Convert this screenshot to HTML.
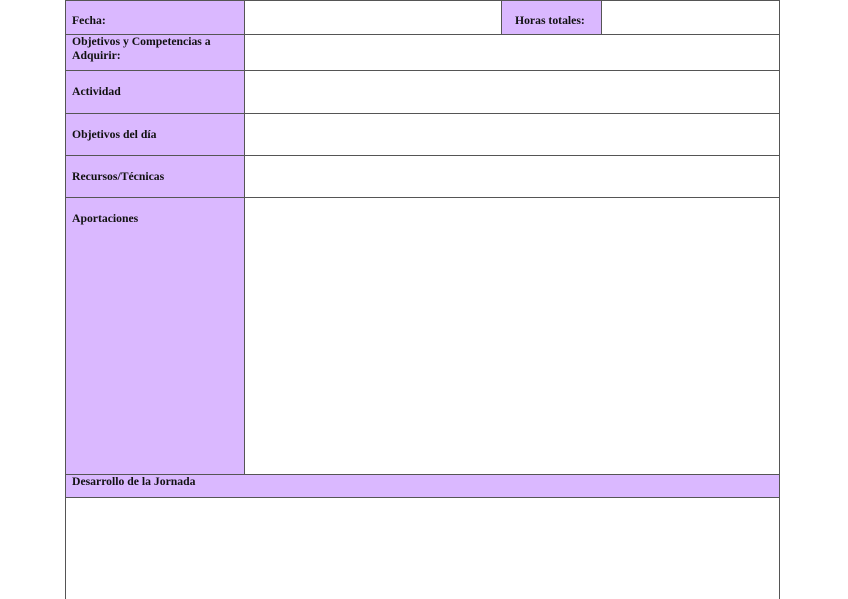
<!DOCTYPE html><html><head><style>
body{margin:0;width:848px;height:599px;background:#fff;position:relative;overflow:hidden;font-family:"Liberation Serif",serif;font-weight:bold;font-size:11.7px;color:#111}
.p{position:absolute;background:#dab8ff}
.h{position:absolute;height:1px;background:#555}
.v{position:absolute;width:1px;background:#555}
.t{position:absolute;line-height:14px}
</style></head><body>
<div class="p" style="left:66px;top:0;width:178px;height:474px"></div>
<div class="p" style="left:501px;top:0;width:100px;height:34px"></div>
<div class="p" style="left:66px;top:474px;width:713px;height:23px"></div>
<div class="h" style="left:66px;top:0;width:714px"></div>
<div class="h" style="left:66px;top:34px;width:714px"></div>
<div class="h" style="left:66px;top:70px;width:714px"></div>
<div class="h" style="left:66px;top:113px;width:714px"></div>
<div class="h" style="left:66px;top:155px;width:714px"></div>
<div class="h" style="left:66px;top:197px;width:714px"></div>
<div class="h" style="left:66px;top:474px;width:714px"></div>
<div class="h" style="left:66px;top:497px;width:714px"></div>
<div class="v" style="left:65px;top:0;height:599px"></div>
<div class="v" style="left:779px;top:0;height:599px"></div>
<div class="v" style="left:244px;top:0;height:474px"></div>
<div class="v" style="left:501px;top:0;height:34px"></div>
<div class="v" style="left:601px;top:0;height:34px"></div>
<div class="t" style="left:72px;top:14px">Fecha:</div>
<div class="t" style="left:515px;top:14px">Horas totales:</div>
<div class="t" style="left:72px;top:35px">Objetivos y Competencias a<br>Adquirir:</div>
<div class="t" style="left:72px;top:85px">Actividad</div>
<div class="t" style="left:72px;top:128px">Objetivos del día</div>
<div class="t" style="left:72px;top:170px">Recursos/Técnicas</div>
<div class="t" style="left:72px;top:212px">Aportaciones</div>
<div class="t" style="left:72px;top:475px">Desarrollo de la Jornada</div>
</body></html>
